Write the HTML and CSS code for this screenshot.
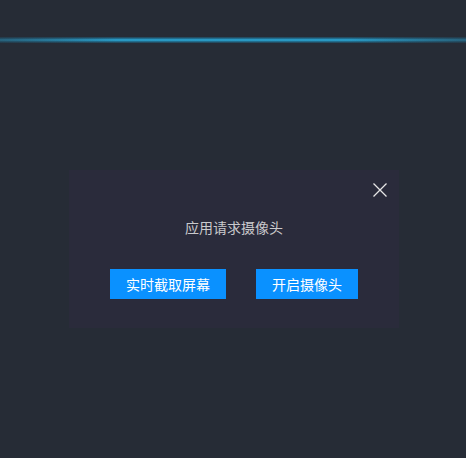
FILE: index.html
```html
<!DOCTYPE html>
<html lang="zh">
<head>
<meta charset="utf-8">
<link rel="stylesheet" href="styles.css">
</head>
<body>
<div class="glow-line"></div>
<div class="dialog">
  <div class="dialog-head">
    <button class="close" aria-label="关闭">
      <svg width="14" height="14" viewBox="0 0 14 14"><path d="M0.5 0.5 L13.5 13.5 M13.5 0.5 L0.5 13.5" stroke="#e6e6e6" stroke-width="1.3" fill="none"/></svg>
    </button>
  </div>
  <div class="title">应用请求摄像头</div>
  <div class="actions">
    <button class="btn btn-wide">实时截取屏幕</button>
    <button class="btn">开启摄像头</button>
  </div>
</div>
</body>
</html>
```
FILE: styles.css
```css
html, body {
  margin: 0;
  padding: 0;
}
body {
  background: #262c36;
  width: 466px;
  height: 458px;
  overflow: hidden;
  font-family: "Noto Sans CJK SC", "Noto Sans", sans-serif;
}
.glow-line {
  margin-top: 37px;
  height: 6px;
  background:
    linear-gradient(to right, rgba(38,44,54,0.5), rgba(38,44,54,0) 25%, rgba(38,44,54,0) 75%, rgba(38,44,54,0.5)),
    linear-gradient(to bottom, rgba(30,150,200,0.15), rgba(30,160,210,0.65) 30%, #2eaedd 50%, rgba(30,160,210,0.65) 70%, rgba(30,150,200,0.15));
}
.dialog {
  margin: 127px 0 0 69px;
  width: 330px;
  height: 158px;
  background: #2a2b3b;
  display: flex;
  flex-direction: column;
  align-items: center;
}
.dialog-head {
  align-self: stretch;
  display: flex;
  justify-content: flex-end;
  padding: 13px 12px 0 0;
}
.close {
  width: 14px;
  height: 14px;
  padding: 0;
  border: 0;
  background: none;
  display: block;
}
.close svg { display: block; }
.title {
  margin-top: 20px;
  color: #c9c9cc;
  font-size: 14px;
  line-height: 20px;
}
.actions {
  margin-top: 32px;
  display: flex;
  gap: 30px;
}
.btn {
  height: 30px;
  width: 102px;
  border: 0;
  padding: 0;
  background: #0a91ff;
  color: #ffffff;
  font-family: "Noto Sans CJK SC", "Noto Sans", sans-serif;
  font-size: 14px;
  line-height: 30px;
}
.btn-wide { width: 116px; }
```
